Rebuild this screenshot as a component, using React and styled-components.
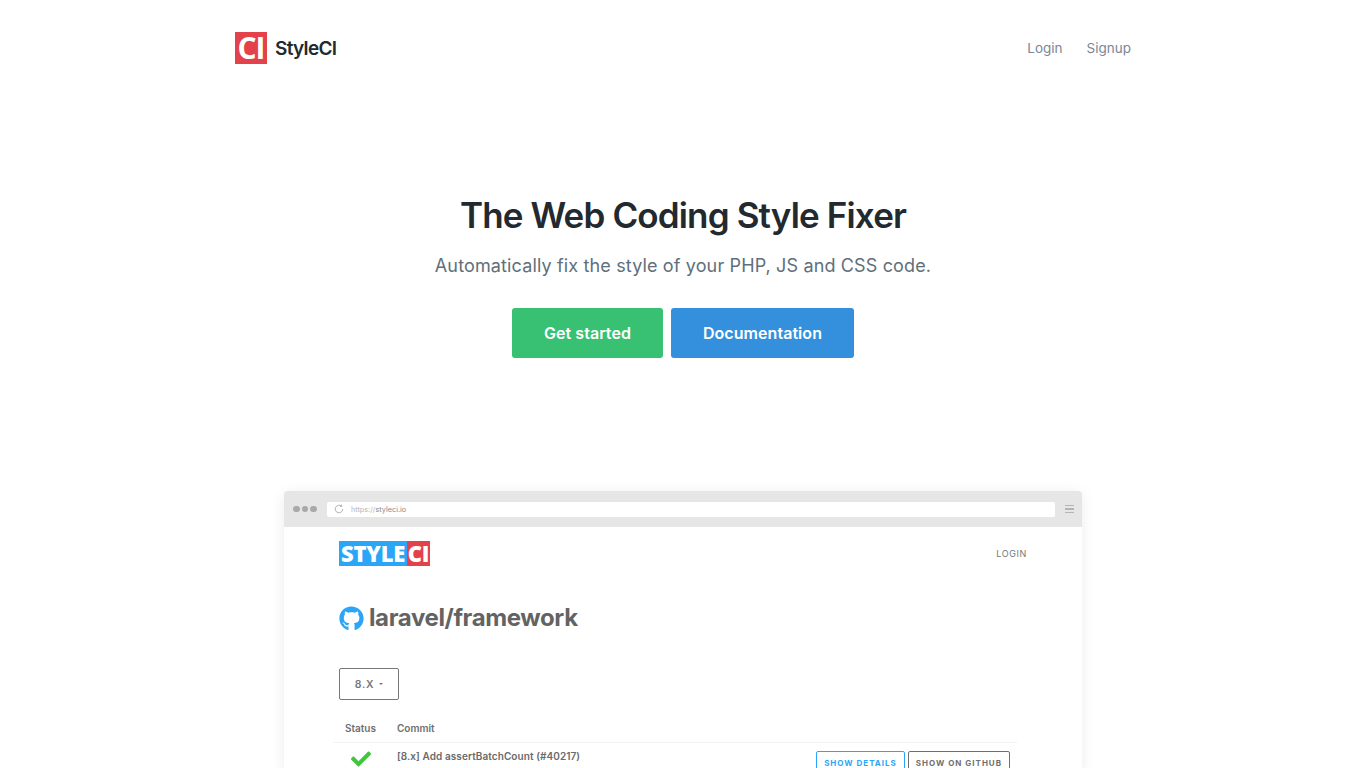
import React from 'react'
import styled, { createGlobalStyle } from 'styled-components'
import { FaGithub, FaCheck } from 'react-icons/fa'

const GlobalStyle = createGlobalStyle`
    html, body {
        margin: 0;
        padding: 0;
        height: 100%;
        overflow: hidden;
        background: #fff;
        font-family: Inter, "Liberation Sans", sans-serif;
    }
    * {
        box-sizing: border-box;
    }
`

const Page = styled.div`
    height: 100vh;
    overflow: hidden;
    display: flex;
    flex-direction: column;
    align-items: center;
`

const Header = styled.header`
    width: 896px;
    height: 96px;
    flex-shrink: 0;
    display: flex;
    align-items: center;
    justify-content: space-between;
`

const Brand = styled.a`
    display: flex;
    align-items: center;
    gap: 8px;
    color: #22292f;
    font-size: 19px;
    font-weight: 600;
    letter-spacing: -0.7px;
`

const BrandMark = styled.div`
    width: 32px;
    height: 32px;
    background: #e3424a;
    color: #fff;
    text-align: center;
    font-family: "Open Sans", sans-serif;
    font-size: 30px;
    line-height: 32px;
    font-weight: 700;
    letter-spacing: -1px;
`

const Nav = styled.nav`
    display: flex;
    gap: 24px;
`

const NavLink = styled.a`
    color: #7b8794;
    font-size: 13.5px;
`

const Hero = styled.section`
    display: flex;
    flex-direction: column;
    align-items: center;
    padding-top: 95px;
    flex-shrink: 0;
`

const Title = styled.h1`
    margin: 0;
    color: #22292f;
    font-size: 35px;
    line-height: 48px;
    font-weight: 600;
    letter-spacing: -0.85px;
`

const Subtitle = styled.p`
    margin: 13px 0 0;
    color: #606f7b;
    font-size: 18px;
    line-height: 28px;
    letter-spacing: 0.14px;
`

const Actions = styled.div`
    display: flex;
    gap: 8px;
    margin-top: 28px;
`

const Button = styled.a`
    height: 50px;
    padding: 0 32px;
    display: flex;
    align-items: center;
    border-radius: 3px;
    background: ${props => props.bg};
    color: #fff;
    font-size: 16px;
    font-weight: 600;
    letter-spacing: 0.05px;
`

const Browser = styled.div`
    width: 798px;
    margin-top: 133px;
    flex-shrink: 0;
    background: #fff;
    border-radius: 4px 4px 0 0;
    box-shadow: 0 2px 14px rgba(0, 0, 0, 0.08);
`

const Chrome = styled.div`
    height: 36px;
    padding: 0 8px 0 9px;
    display: flex;
    align-items: center;
    background: #e6e6e6;
    border-radius: 4px 4px 0 0;
`

const Dots = styled.div`
    display: flex;
    gap: 2.2px;
    margin-right: 10px;
`

const Dot = styled.span`
    width: 6.5px;
    height: 6.5px;
    border-radius: 50%;
    background: #a9a9a9;
`

const AddressBar = styled.div`
    flex: 1;
    height: 15px;
    padding-left: 7px;
    display: flex;
    align-items: center;
    gap: 7px;
    background: #fff;
    border-radius: 2px;
    font-size: 7.3px;
    color: #b5b5b5;
`

const Host = styled.span`
    color: #8a8a8a;
    margin-left: -7px;
`

const Burger = styled.div`
    width: 9px;
    margin-left: 10px;
    display: flex;
    flex-direction: column;
    gap: 2px;
`

const BurgerLine = styled.span`
    height: 1.5px;
    background: #b4b4b4;
`

const Content = styled.div`
    padding: 14px 55px 0;
`

const InnerTop = styled.div`
    display: flex;
    align-items: center;
    justify-content: space-between;
`

const Wordmark = styled.div`
    display: flex;
    height: 25px;
    font-family: "Open Sans", sans-serif;
    font-size: 22px;
    font-weight: 800;
    line-height: 25px;
    color: #fff;
`

const WordPart = styled.span`
    background: ${props => props.bg};
    padding: 0 ${props => props.pad}px;
    letter-spacing: -0.2px;
`

const InnerLogin = styled.span`
    color: #777;
    font-size: 9px;
    letter-spacing: 0.6px;
`

const Repo = styled.div`
    margin-top: 37px;
    display: flex;
    align-items: center;
    gap: 5px;
    color: #636363;
    font-size: 24px;
    font-weight: 700;
    line-height: 30px;
    letter-spacing: -0.38px;
`

const Select = styled.div`
    width: 60px;
    height: 32px;
    margin-top: 35px;
    display: flex;
    align-items: center;
    justify-content: center;
    gap: 5px;
    border: 1px solid #777;
    border-radius: 2px;
    color: #777;
    font-size: 10.5px;
    font-weight: 600;
    letter-spacing: 0.7px;
`

const Caret = styled.span`
    border-left: 2.5px solid transparent;
    border-right: 2.5px solid transparent;
    border-top: 2.5px solid #777;
`

const TableHead = styled.div`
    width: 684px;
    height: 14px;
    margin: 21px 0 0 -6px;
    padding-left: 12px;
    display: flex;
    align-items: center;
    color: #6f6f6f;
    font-size: 10px;
    font-weight: 600;
`

const StatusHead = styled.span`
    width: 52px;
`

const CommitRow = styled.div`
    width: 684px;
    margin: 7px 0 0 -6px;
    padding: 7px 7px 0 15px;
    border-top: 1px solid #f3f3f3;
    display: flex;
    align-items: flex-start;
`

const StatusCell = styled.div`
    width: 49px;
    margin-top: -1px;
    padding-left: 3px;
    color: #3fc63c;
    font-size: 20px;
    line-height: 20px;
`

const CommitText = styled.div`
    flex: 1;
    color: #6a6a6a;
    font-size: 10px;
    font-weight: 600;
    letter-spacing: 0.08px;
    line-height: 12px;
`

const RowActions = styled.div`
    display: flex;
    gap: 3px;
    margin-top: 1px;
`

const OutlineButton = styled.span`
    height: 24px;
    padding: 6px 7px 0;
    display: flex;
    align-items: flex-start;
    border: 1px solid ${props => props.tone};
    border-radius: 2px;
    color: ${props => props.tone};
    font-size: 8px;
    font-weight: 700;
    letter-spacing: 1px;
    white-space: nowrap;
`

export default function App() {
    return (
        <Page>
            <GlobalStyle />
            <Header>
                <Brand>
                    <BrandMark>CI</BrandMark>
                    StyleCI
                </Brand>
                <Nav>
                    <NavLink>Login</NavLink>
                    <NavLink>Signup</NavLink>
                </Nav>
            </Header>

            <Hero>
                <Title>The Web Coding Style Fixer</Title>
                <Subtitle>Automatically fix the style of your PHP, JS and CSS code.</Subtitle>
                <Actions>
                    <Button bg="#38c172">Get started</Button>
                    <Button bg="#3490dc">Documentation</Button>
                </Actions>
            </Hero>

            <Browser>
                <Chrome>
                    <Dots>
                        <Dot /><Dot /><Dot />
                    </Dots>
                    <AddressBar>
                        <svg width="10" height="10" viewBox="0 0 24 24" fill="none" stroke="#aaa" strokeWidth="2.2">
                            <path d="M21 12a9 9 0 1 1-3-6.7" />
                            <path d="M18.5 1.5v4.2h-4.2" />
                        </svg>
                        <span>https://</span>
                        <Host>styleci.io</Host>
                    </AddressBar>
                    <Burger>
                        <BurgerLine /><BurgerLine /><BurgerLine />
                    </Burger>
                </Chrome>
                <Content>
                    <InnerTop>
                        <Wordmark>
                            <WordPart bg="#2ba5f7" pad={2}>STYLE</WordPart>
                            <WordPart bg="#e3424a" pad={0.5}>CI</WordPart>
                        </Wordmark>
                        <InnerLogin>LOGIN</InnerLogin>
                    </InnerTop>
                    <Repo>
                        <FaGithub color="#2ba5f7" size={25} />
                        laravel/framework
                    </Repo>
                    <Select>
                        8.X
                        <Caret />
                    </Select>
                    <TableHead>
                        <StatusHead>Status</StatusHead>
                        <span>Commit</span>
                    </TableHead>
                    <CommitRow>
                        <StatusCell><FaCheck /></StatusCell>
                        <CommitText>[8.x] Add assertBatchCount (#40217)</CommitText>
                        <RowActions>
                            <OutlineButton tone="#2ba5f7">SHOW DETAILS</OutlineButton>
                            <OutlineButton tone="#6f6f6f">SHOW ON GITHUB</OutlineButton>
                        </RowActions>
                    </CommitRow>
                </Content>
            </Browser>
        </Page>
    )
}
